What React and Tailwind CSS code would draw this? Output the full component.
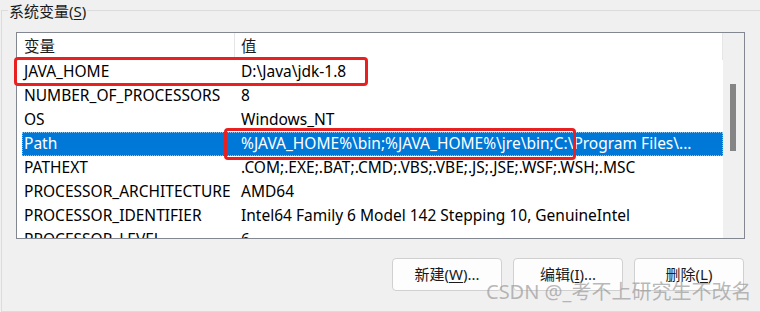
import React from 'react';

const font = { fontFamily: '"Noto Sans", "Noto Sans CJK SC", sans-serif' };

const rows = [
  ['JAVA_HOME', 'D:\\Java\\jdk-1.8'],
  ['NUMBER_OF_PROCESSORS', '8'],
  ['OS', 'Windows_NT'],
  ['Path', '%JAVA_HOME%\\bin;%JAVA_HOME%\\jre\\bin;C:\\Program Files\\...'],
  ['PATHEXT', '.COM;.EXE;.BAT;.CMD;.VBS;.VBE;.JS;.JSE;.WSF;.WSH;.MSC'],
  ['PROCESSOR_ARCHITECTURE', 'AMD64'],
  ['PROCESSOR_IDENTIFIER', 'Intel64 Family 6 Model 142 Stepping 10, GenuineIntel'],
  ['PROCESSOR_LEVEL', '6'],
];

function Row({ name, value, selected }) {
  if (selected) {
    return (
      <div className="h-[24px] shrink-0 flex items-center pl-[5px]">
        <div className="h-full flex-1 flex items-center bg-[#0078d7] text-white border border-dotted border-[#8cc4f0]">
          <div className="w-[212px] pl-[1px] whitespace-nowrap">{name}</div>
          <div className="pl-[6px] whitespace-nowrap">{value}</div>
        </div>
      </div>
    );
  }
  return (
    <div className="h-[24px] shrink-0 flex items-center text-[#000]">
      <div className="w-[218px] pl-[7px] whitespace-nowrap">{name}</div>
      <div className="pl-[6px] whitespace-nowrap">{value}</div>
    </div>
  );
}

function Btn({ label, hot, rest }) {
  return (
    <button className="w-[110px] h-[33px] rounded-[4px] border border-[#d0d0d0] bg-[#fdfdfd] text-[15px] text-[#1a1a1a] flex items-center justify-center">
      {label}(<span className="underline underline-offset-2">{hot}</span>){rest}
    </button>
  );
}

export default function App() {
  return (
    <div className="w-[760px] h-[312px] bg-[#f0f0f0] overflow-hidden relative text-[15px]" style={font}>
      <div className="pt-[10px] pl-[1px] h-full">
        <div className="relative h-[302px] border-l border-t border-b border-[#dcdcdc] pl-[14px] pt-[21px]">
          {/* group title */}
          <div className="absolute left-[6px] top-[-10px] px-[1px] bg-[#f0f0f0] leading-[20px] text-[#1a1a1a]">
            系统变量(<span className="underline underline-offset-2">S</span>)
          </div>

          {/* list */}
          <div className="w-[729px] h-[207px] border border-[#828790] bg-white flex overflow-hidden text-[15.5px]">
            <div className="flex-1 flex flex-col overflow-hidden">
              <div className="h-[27px] shrink-0 flex items-center relative">
                <div className="w-[218px] pl-[7px] h-full flex items-center border-r border-[#e5e5e5] text-[#1a1a1a]">变量</div>
                <div className="pl-[6px] flex-1 h-full flex items-center border-r border-[#e5e5e5] text-[#1a1a1a]">值</div>
              </div>
              {rows.map(([n, v]) => (
                <Row key={n} name={n} value={v} selected={n === 'Path'} />
              ))}
            </div>
            <div className="w-[21px] shrink-0 bg-[#f0f0f0] pl-[7px] pt-[51px]">
              <div className="w-[6px] h-[67px] bg-[#858585]" />
            </div>
          </div>

          {/* buttons */}
          <div className="w-[729px] flex justify-end gap-[11px] mt-[19px] pr-[1px]">
            <Btn label="新建" hot="W" rest="..." />
            <Btn label="编辑" hot="I" rest="..." />
            <Btn label="删除" hot="L" rest="" />
          </div>

          {/* red highlight boxes */}
          <div className="absolute left-[12px] top-[46px] w-[354px] h-[29px] border-[3px] border-[#e8201f] rounded-[4px]" />
          <div className="absolute left-[222px] top-[117px] w-[352px] h-[32px] border-[3px] border-[#e8201f] rounded-[4px]" />
        </div>
      </div>

      {/* watermark */}
      <div
        className="absolute left-[486px] top-[279px] text-[20px] leading-[26px] text-[#9a9a9a]/70 whitespace-nowrap"
        style={font}
      >
        CSDN @_考不上研究生不改名
      </div>
    </div>
  );
}
